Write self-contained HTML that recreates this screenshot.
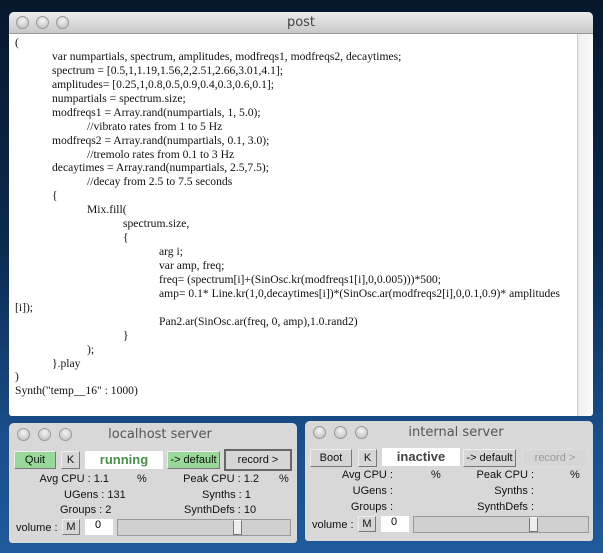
<!DOCTYPE html><html><head><style>
*{margin:0;padding:0;box-sizing:border-box}
body{width:603px;height:553px;overflow:hidden;background:linear-gradient(#06172c 0%,#0b2a50 45%,#1a4f8c 80%,#1f5a9a 100%);font-family:"Liberation Sans",sans-serif;position:relative}
.win{position:absolute;background:#d8d8d8;border-radius:5px 5px 3px 3px;overflow:hidden}
.tb{position:absolute;left:0;right:0;top:0;background:linear-gradient(#ececec,#c8c8c8);border-bottom:1px solid #999;text-align:center;color:#444;font-family:"DejaVu Sans",sans-serif}
.dot{position:absolute;width:13px;height:13px;border-radius:50%;background:radial-gradient(circle at 50% 35%,#f4f4f4,#b9b9b9);border:1px solid #999}
.code{position:absolute;left:0;top:22px;right:16px;bottom:0;background:#fff;font-family:"Liberation Serif",serif;font-size:11.6px;color:#111}
.code div{position:absolute;white-space:nowrap;line-height:13px}
.sb{position:absolute;right:0;top:22px;width:16px;bottom:0;background:linear-gradient(90deg,#eee,#fafafa);border-left:1px solid #ccc}
.b{position:absolute;height:18px;font-size:11px;text-align:center;line-height:16px;border:1px solid #777;border-top-color:#eee;border-left-color:#eee;background:#d6d6d6;color:#111}
.g{background:#98d898}
.l{position:absolute;font-size:11px;color:#111;white-space:nowrap}
.r{text-align:right}
.st{position:absolute;background:#fff;text-align:center;font-size:13px;font-weight:bold;height:18px;line-height:18px}
</style></head><body>
<div class="win" style="left:9px;top:12px;width:584px;height:404px">
<div class="tb" style="height:22px;line-height:21px;font-size:13px">post</div>
<div class="dot" style="left:7px;top:4px"></div><div class="dot" style="left:27px;top:4px"></div><div class="dot" style="left:47px;top:4px"></div>
<div class="code">
<div style="left:6px;top:2px">(</div>
<div style="left:43px;top:16px">var numpartials, spectrum, amplitudes, modfreqs1, modfreqs2, decaytimes;</div>
<div style="left:43px;top:30px">spectrum = [0.5,1,1.19,1.56,2,2.51,2.66,3.01,4.1];</div>
<div style="left:43px;top:44px">amplitudes= [0.25,1,0.8,0.5,0.9,0.4,0.3,0.6,0.1];</div>
<div style="left:43px;top:58px">numpartials = spectrum.size;</div>
<div style="left:43px;top:72px">modfreqs1 = Array.rand(numpartials, 1, 5.0);</div>
<div style="left:78px;top:86px">//vibrato rates from 1 to 5 Hz</div>
<div style="left:43px;top:100px">modfreqs2 = Array.rand(numpartials, 0.1, 3.0);</div>
<div style="left:78px;top:114px">//tremolo rates from 0.1 to 3 Hz</div>
<div style="left:43px;top:127px">decaytimes = Array.rand(numpartials, 2.5,7.5);</div>
<div style="left:78px;top:141px">//decay from 2.5 to 7.5 seconds</div>
<div style="left:43px;top:155px">{</div>
<div style="left:78px;top:169px">Mix.fill(</div>
<div style="left:114px;top:183px">spectrum.size,</div>
<div style="left:114px;top:197px">{</div>
<div style="left:150px;top:211px">arg i;</div>
<div style="left:150px;top:225px">var amp, freq;</div>
<div style="left:150px;top:239px">freq= (spectrum[i]+(SinOsc.kr(modfreqs1[i],0,0.005)))*500;</div>
<div style="left:150px;top:253px">amp= 0.1* Line.kr(1,0,decaytimes[i])*(SinOsc.ar(modfreqs2[i],0,0.1,0.9)* amplitudes</div>
<div style="left:6px;top:267px">[i]);</div>
<div style="left:150px;top:281px">Pan2.ar(SinOsc.ar(freq, 0, amp),1.0.rand2)</div>
<div style="left:114px;top:295px">}</div>
<div style="left:78px;top:309px">);</div>
<div style="left:43px;top:323px">}.play</div>
<div style="left:6px;top:336px">)</div>
<div style="left:6px;top:350px">Synth("temp__16" : 1000)</div>
</div>
<div class="sb"></div>
</div>

<div class="win" style="left:9px;top:423px;width:288px;height:120px">
<div class="tb" style="height:24px;line-height:24px;font-size:13px;border:none;background:#d8d8d8;padding-left:14px;color:#555">localhost server</div>
<div class="dot" style="left:8px;top:5px"></div><div class="dot" style="left:29px;top:5px"></div><div class="dot" style="left:50px;top:5px"></div>
<div class="b g" style="left:5px;top:28px;width:42px">Quit</div>
<div class="b" style="left:52px;top:28px;width:19px">K</div>
<div class="st" style="left:76px;top:28px;width:78px;color:#4a8f4a">running</div>
<div class="b g" style="left:158px;top:28px;width:53px">-&gt; default</div>
<div class="b" style="left:215px;top:26px;width:68px;height:22px;border:2px solid #666;line-height:18px">record &gt;</div>
<div class="l r" style="right:188px;top:50px">Avg CPU : 1.1</div><div class="l" style="left:128px;top:50px">%</div>
<div class="l r" style="right:38px;top:50px">Peak CPU : 1.2</div><div class="l" style="left:270px;top:50px">%</div>
<div class="l" style="left:55px;top:66px">UGens : 131</div>
<div class="l" style="left:193px;top:66px">Synths : 1</div>
<div class="l" style="left:51px;top:81px">Groups : 2</div>
<div class="l" style="left:175px;top:81px">SynthDefs : 10</div>
<div class="l" style="left:7px;top:99px">volume :</div>
<div class="b" style="left:53px;top:96px;width:18px;height:16px;line-height:14px">M</div>
<div style="position:absolute;left:76px;top:96px;width:28px;height:16px;background:#fff;font-size:11px;padding-left:10px">0</div>
<div style="position:absolute;left:108px;top:96px;width:174px;height:17px;border:1px solid #999;background:#d0d0d0"></div>
<div style="position:absolute;left:224px;top:97px;width:9px;height:15px;background:#eee;border:1px solid #777;border-top-color:#fff"></div>
</div>

<div class="win" style="left:305px;top:421px;width:288px;height:120px">
<div class="tb" style="height:24px;line-height:24px;font-size:13px;border:none;background:#d8d8d8;padding-left:14px;color:#555">internal server</div>
<div class="dot" style="left:8px;top:5px"></div><div class="dot" style="left:29px;top:5px"></div><div class="dot" style="left:50px;top:5px"></div>
<div class="b" style="left:5px;top:28px;width:42px">Boot</div>
<div class="b" style="left:53px;top:28px;width:19px">K</div>
<div class="st" style="left:77px;top:27px;width:78px;color:#444">inactive</div>
<div class="b" style="left:158px;top:28px;width:53px">-&gt; default</div>
<div class="b" style="left:217px;top:28px;width:66px;color:#999;border-color:#ddd">record &gt;</div>
<div class="l r" style="right:200px;top:48px">Avg CPU :</div><div class="l" style="left:126px;top:48px">%</div>
<div class="l r" style="right:59px;top:48px">Peak CPU :</div><div class="l" style="left:265px;top:48px">%</div>
<div class="l r" style="right:200px;top:64px">UGens :</div>
<div class="l r" style="right:59px;top:64px">Synths :</div>
<div class="l r" style="right:200px;top:80px">Groups :</div>
<div class="l r" style="right:59px;top:80px">SynthDefs :</div>
<div class="l" style="left:7px;top:98px">volume :</div>
<div class="b" style="left:53px;top:95px;width:18px;height:16px;line-height:14px">M</div>
<div style="position:absolute;left:76px;top:95px;width:28px;height:16px;background:#fff;font-size:11px;padding-left:10px">0</div>
<div style="position:absolute;left:108px;top:95px;width:176px;height:17px;border:1px solid #999;background:#d0d0d0"></div>
<div style="position:absolute;left:224px;top:96px;width:9px;height:15px;background:#eee;border:1px solid #777;border-top-color:#fff"></div>
</div>
</body></html>
